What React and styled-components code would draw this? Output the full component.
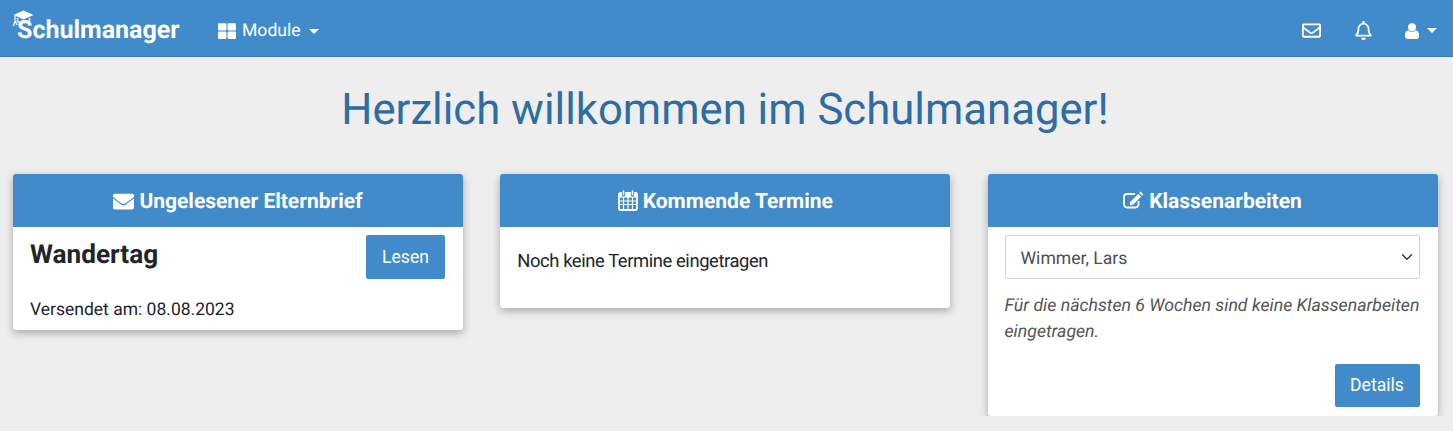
import React from "react";
import styled, { createGlobalStyle } from "styled-components";
import { FaEnvelope, FaRegEnvelope, FaRegBell, FaThLarge } from "react-icons/fa";

const GlobalStyle = createGlobalStyle`
  html, body { margin: 0; padding: 0; }
  body {
    background: #eeeeee;
    font-family: Roboto, "Liberation Sans", sans-serif;
    font-size: 17.6px;
    line-height: 1.5;
    color: #212529;
    text-rendering: geometricPrecision;
  }
`;

const Navbar = styled.nav`
  box-sizing: border-box;
  display: flex;
  align-items: center;
  height: 57px;
  padding-top: 5px;
  background: #428bca;
  border-bottom: 1px solid #3a7cb5;
  color: #fff;
`;

const Brand = styled.a`
  position: relative;
  margin-left: 17px;
  width: 201px;
  font-size: 25px;
  font-weight: 700;
  line-height: 30px;
  color: #fff;
`;

const BrandCap = styled.svg`
  position: absolute;
  left: -4px;
  top: -6px;
  width: 21px;
  height: 19px;
`;

const NavLink = styled.a`
  display: flex;
  align-items: center;
  gap: ${(props) => props.$gap || 0}px;
  padding-top: ${(props) => props.$drop || 0}px;
  color: #fff;
`;

const Caret = styled.span`
  width: 0;
  height: 0;
  margin-left: ${(props) => props.$offset}px;
  border-top: 5px solid #fff;
  border-left: 5px solid transparent;
  border-right: 5px solid transparent;
`;

const NavRight = styled.div`
  display: flex;
  align-items: center;
  gap: 32.5px;
  margin-left: auto;
  margin-right: 16px;
`;

const Title = styled.h1`
  margin: 22px 0 38px;
  padding: 4px 3px 0 0;
  text-align: center;
  font-size: 43.7px;
  font-weight: 400;
  line-height: 1.2;
  height: 53px;
  color: #2e6da4;
`;

const Cards = styled.main`
  display: grid;
  grid-template-columns: repeat(3, 450px);
  column-gap: 37.25px;
  align-items: start;
  padding: 0 15px 0 13px;
`;

const Card = styled.section`
  background: #fff;
  border-radius: 3px;
  box-shadow: 0 3px 8px rgba(0, 0, 0, 0.3);
  overflow: hidden;
`;

const CardHeader = styled.h2`
  box-sizing: border-box;
  display: flex;
  align-items: center;
  justify-content: center;
  gap: 5px;
  height: 53px;
  margin: 0;
  padding-top: 4px;
  background: #428bca;
  color: #fff;
  font-size: 21px;
  font-weight: 700;
`;

const HeaderIcon = styled.span`
  display: flex;
  margin-bottom: ${(props) => props.$lift}px;
`;

const LetterBody = styled.div`
  padding: 8px 18px 7px 17px;
`;

const LetterTop = styled.div`
  display: flex;
  align-items: flex-start;
  justify-content: space-between;
`;

const LetterTitle = styled.h3`
  margin: 0;
  font-size: 26.2px;
  font-weight: 700;
  line-height: 41px;
`;

const Button = styled.button`
  width: ${(props) => props.$width}px;
  height: ${(props) => props.$height}px;
  padding: 0;
  border: 0;
  border-radius: 2px;
  background: #428bca;
  color: #fff;
  font: inherit;
`;

const Sent = styled.p`
  margin: 18px 0 0;
  font-size: 17.5px;
`;

const EmptyNote = styled.p`
  margin: 0;
  padding: 21px 18px 32px 17px;
  font-size: 18.4px;
  letter-spacing: -0.41px;
`;

const ExamBody = styled.div`
  padding: 8px 18px 9px 17px;
`;

const Picker = styled.div`
  position: relative;
  display: flex;
  align-items: center;
  height: 37px;
  padding: 5px 0 0 15px;
  border: 1px solid #ced4da;
  border-radius: 2px;
  color: #495057;
`;

const Chevron = styled.svg`
  position: absolute;
  right: 6px;
  top: 15px;
  width: 12px;
  height: 12px;
`;

const ExamNote = styled.p`
  margin: 14px 0 19px;
  font-size: 17.7px;
  font-style: italic;
  line-height: 26px;
  color: #555;
`;

const ExamFooter = styled.div`
  display: flex;
  justify-content: flex-end;
`;

const CapIcon = () => (
  <BrandCap viewBox="0 0 21 19">
    <path d="M10.5 0.5 20.5 5 10.5 9.5 0.5 5Z" fill="#fff" />
    <path d="M4.5 8v3.5c1.5 1.6 10.5 1.6 12 0V8" fill="none" stroke="#fff" strokeWidth="1.5" />
    <path d="M2 5.5V11l-1.5 5M2 11l2 4" fill="none" stroke="#fff" strokeWidth="1.2" />
  </BrandCap>
);

const CalendarIcon = () => (
  <svg width="20" height="21" viewBox="0 0 20 21">
    <rect x="1" y="3" width="18" height="17" rx="1.5" fill="none" stroke="#fff" strokeWidth="1.8" />
    <path d="M1 4h18v3.5H1Z" fill="#fff" />
    <path d="M1 11h18M1 14.5h18M5.5 7v13M10 7v13M14.5 7v13" stroke="#fff" strokeWidth="1.2" />
    <path d="M5.5 1v4M14.5 1v4" stroke="#428bca" strokeWidth="3.4" strokeLinecap="round" />
    <path d="M5.5 1v3.5M14.5 1v3.5" stroke="#fff" strokeWidth="1.6" strokeLinecap="round" />
  </svg>
);

const EditIcon = () => (
  <svg width="21" height="18" viewBox="0 0 21 18">
    <path d="M15.5 10v3.5a3 3 0 0 1-3 3H4a3 3 0 0 1-3-3V6a3 3 0 0 1 3-3h8" fill="none" stroke="#fff" strokeWidth="1.8" />
    <path d="M17.6 0.6 20.4 3.4 19 4.8 16.2 2ZM15.3 2.9 18.1 5.7 10 13.8 6.7 14.3 7.2 11Z" fill="#fff" />
  </svg>
);

const UserIcon = () => (
  <svg width="14" height="16" viewBox="0 0 14 16">
    <circle cx="7" cy="4.2" r="4" fill="#fff" />
    <path d="M3.2 7.2C4.2 8.2 5.5 8.8 7 8.8s2.8-.6 3.8-1.6c2 .2 3.2 2 3.2 5v1.3c0 1.5-1 2.5-2.5 2.5h-9C1 16 0 15 0 13.5v-1.3c0-3 1.2-4.8 3.2-5Z" fill="#fff" />
  </svg>
);

export default function App() {
  return (
    <>
      <GlobalStyle />
      <Navbar>
        <Brand>
          <CapIcon />
          Schulmanager
        </Brand>
        <NavLink $gap={6} $drop={2}>
          <FaThLarge size={18} />
          Module
          <Caret $offset={2} />
        </NavLink>
        <NavRight>
          <NavLink>
            <FaRegEnvelope size={19} />
          </NavLink>
          <NavLink>
            <FaRegBell size={19} />
          </NavLink>
          <NavLink>
            <UserIcon />
            <Caret $offset={8} />
          </NavLink>
        </NavRight>
      </Navbar>
      <Title>Herzlich willkommen im Schulmanager!</Title>
      <Cards>
        <Card>
          <CardHeader>
            <HeaderIcon $lift={2}>
              <FaEnvelope size={21} />
            </HeaderIcon>
            Ungelesener Elternbrief
          </CardHeader>
          <LetterBody>
            <LetterTop>
              <LetterTitle>Wandertag</LetterTitle>
              <Button $width={79} $height={44}>Lesen</Button>
            </LetterTop>
            <Sent>Versendet am: 08.08.2023</Sent>
          </LetterBody>
        </Card>
        <Card>
          <CardHeader>
            <HeaderIcon $lift={4}>
              <CalendarIcon />
            </HeaderIcon>
            Kommende Termine
          </CardHeader>
          <EmptyNote>Noch keine Termine eingetragen</EmptyNote>
        </Card>
        <Card>
          <CardHeader>
            <HeaderIcon $lift={6}>
              <EditIcon />
            </HeaderIcon>
            Klassenarbeiten
          </CardHeader>
          <ExamBody>
            <Picker>
              Wimmer, Lars
              <Chevron viewBox="0 0 16 16">
                <path d="M2 5l6 6 6-6" fill="none" stroke="#343a40" strokeWidth="2" strokeLinecap="round" strokeLinejoin="round" />
              </Chevron>
            </Picker>
            <ExamNote>Für die nächsten 6 Wochen sind keine Klassenarbeiten eingetragen.</ExamNote>
            <ExamFooter>
              <Button $width={85} $height={43}>Details</Button>
            </ExamFooter>
          </ExamBody>
        </Card>
      </Cards>
    </>
  );
}
